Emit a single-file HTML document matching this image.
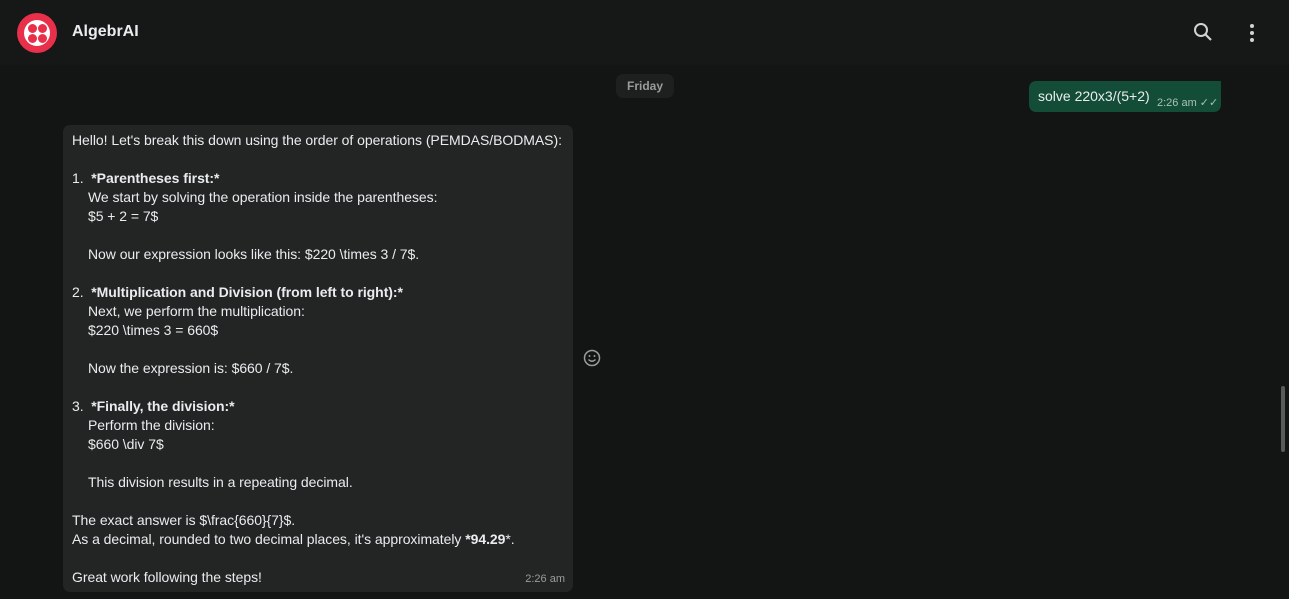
<!DOCTYPE html>
<html><head><style>
*{margin:0;padding:0;box-sizing:border-box}
body{width:1289px;height:599px;overflow:hidden;background:#161717;font-family:"Liberation Sans",sans-serif;position:relative}
.hdr{position:absolute;left:0;top:0;width:1289px;height:65px;background:#161717;}
.logo{position:absolute;left:17px;top:13px;width:40px;height:40px;border-radius:50%;background:#e8304a}
.logo .in{position:absolute;left:7px;top:7px;width:26px;height:26px;border-radius:50%;background:#fff}
.logo .d{position:absolute;width:9px;height:9px;border-radius:50%;background:#e8304a}
.title{position:absolute;left:72px;top:23px;color:#e9edef;font-weight:bold;font-size:16px}
.chat{position:absolute;left:0;top:65px;width:1289px;height:534px;background:#131414}
.day{position:absolute;left:616px;top:74px;width:58px;height:24px;border-radius:7px;background:#1e1f1f;color:#9a9c9c;font-size:12px;font-weight:bold;text-align:center;line-height:24px}
.out{position:absolute;left:1029px;top:81px;width:192px;height:31px;background:#144d37;border-radius:7px 0 7px 7px;color:#e9edef;font-size:14px;padding:7px 9px;white-space:nowrap}
.out .t{position:absolute;left:128px;top:15px;font-size:11px;color:#a8c2b6}
.in1{position:absolute;left:63px;top:125px;width:510px;height:467px;background:#232424;border-radius:7px;color:#e9edef;font-size:14px;line-height:19px;padding:6px 9px;white-space:nowrap;letter-spacing:-0.05px}
.in1 .i{padding-left:16px}
.in1 .t{position:absolute;right:8px;bottom:3px;font-size:11px;color:#9a9c9c;letter-spacing:0}
.scroll{position:absolute;left:1281px;top:386px;width:4px;height:66px;background:#5a5a5a;border-radius:2px}
</style></head><body>
<div class="hdr">
<div class="logo"><div class="in">
<div class="d" style="left:3.5px;top:3.5px"></div><div class="d" style="left:13.5px;top:3.5px"></div>
<div class="d" style="left:3.5px;top:13.5px"></div><div class="d" style="left:13.5px;top:13.5px"></div></div></div>
<div class="title">AlgebrAI</div>
<svg style="position:absolute;left:1193px;top:22px" width="20" height="20" viewBox="0 0 20 20"><circle cx="8" cy="8" r="6" fill="none" stroke="#d0d3d4" stroke-width="2"/><line x1="12.5" y1="12.5" x2="18" y2="18" stroke="#d0d3d4" stroke-width="2.2"/></svg>
<svg style="position:absolute;left:1249px;top:23px" width="6" height="20" viewBox="0 0 6 20"><circle cx="3" cy="3" r="2" fill="#d0d3d4"/><circle cx="3" cy="10" r="2" fill="#d0d3d4"/><circle cx="3" cy="17" r="2" fill="#d0d3d4"/></svg>
</div>
<div class="chat"></div>
<div class="day">Friday</div>
<div class="out">solve 220x3/(5+2)<span class="t">2:26 am ✓✓</span></div>
<div class="in1">
Hello! Let's break this down using the order of operations (PEMDAS/BODMAS):<br><br>
1.&nbsp; <b>*Parentheses first:*</b><br>
<div class="i">We start by solving the operation inside the parentheses:<br>$5 + 2 = 7$<br><br>Now our expression looks like this: $220 \times 3 / 7$.</div><br>
2.&nbsp; <b>*Multiplication and Division (from left to right):*</b><br>
<div class="i">Next, we perform the multiplication:<br>$220 \times 3 = 660$<br><br>Now the expression is: $660 / 7$.</div><br>
3.&nbsp; <b>*Finally, the division:*</b><br>
<div class="i">Perform the division:<br>$660 \div 7$<br><br>This division results in a repeating decimal.</div><br>
The exact answer is $\frac{660}{7}$.<br>
As a decimal, rounded to two decimal places, it's approximately <b>*94.29</b>*.<br><br>
Great work following the steps!
<span class="t">2:26 am</span>
</div>
<svg style="position:absolute;left:583px;top:349px" width="18" height="18" viewBox="0 0 18 18"><circle cx="9" cy="9" r="7.5" fill="none" stroke="#9a9c9c" stroke-width="1.5"/><circle cx="6.5" cy="7" r="1" fill="#9a9c9c"/><circle cx="11.5" cy="7" r="1" fill="#9a9c9c"/><path d="M5.5 10.5 Q9 14 12.5 10.5" fill="none" stroke="#9a9c9c" stroke-width="1.3"/></svg>
<div class="scroll"></div>
</body></html>
